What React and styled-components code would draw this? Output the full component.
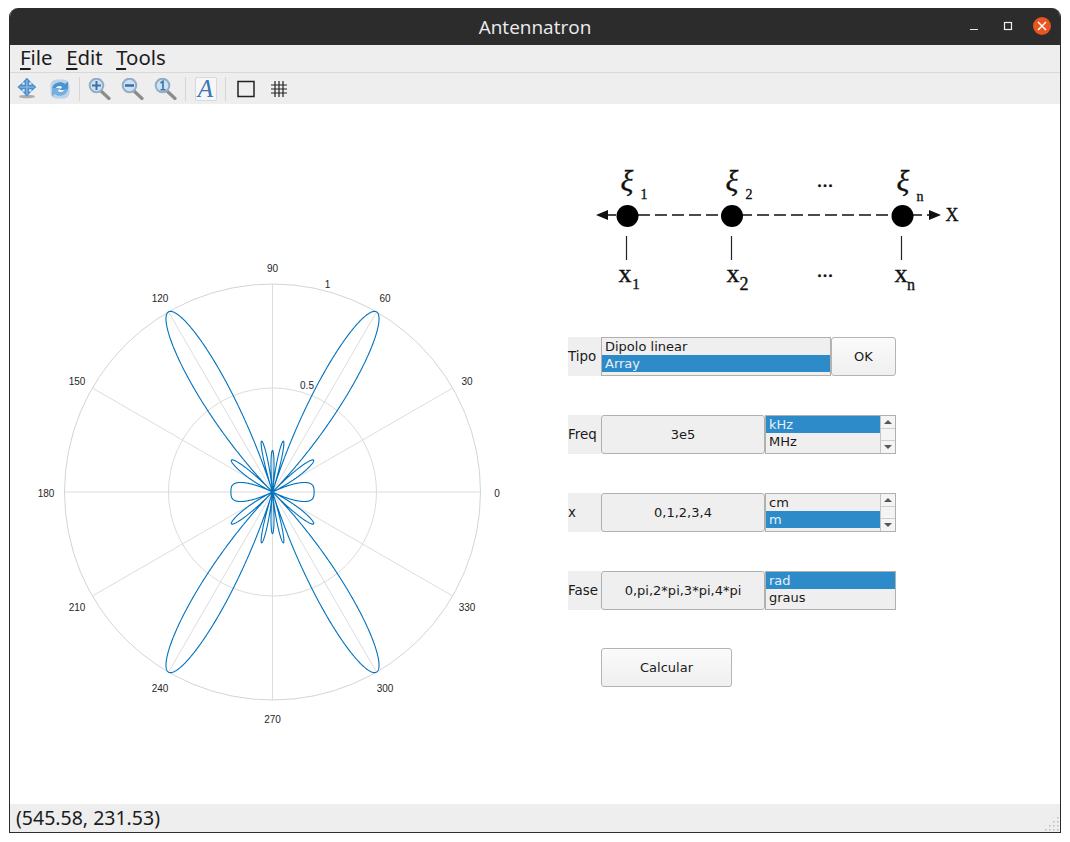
import React from "react";
import styled, { createGlobalStyle } from "styled-components";

const GlobalStyle = createGlobalStyle`
    html, body {
        margin: 0;
        padding: 0;
        background: #ffffff;
    }
    body {
        font-family: "DejaVu Sans", sans-serif;
    }
`;

const Window = styled.div`
    box-sizing: border-box;
    width: 1052px;
    height: 825px;
    margin: 8px 0 0 9px;
    display: flex;
    flex-direction: column;
    border-radius: 9px 9px 0 0;
    border: 1px solid #2c2c2c;
    border-top: 0;
    overflow: hidden;
`;

const TitleBar = styled.header`
    position: relative;
    flex: 0 0 37px;
    display: flex;
    align-items: center;
    justify-content: center;
    background: #2c2c2c;
    color: #ececec;
    font-family: "Open Sans", "Noto Sans", sans-serif;
    font-size: 19px;
`;

const WindowControls = styled.div`
    position: absolute;
    right: 9px;
    top: 9px;
    display: flex;
    align-items: center;
    gap: 16px;
`;

const WindowControl = styled.button`
    width: 18px;
    height: 18px;
    padding: 0;
    border: 0;
    border-radius: 50%;
    background: ${(props) => (props.$close ? "#e95420" : "transparent")};
    display: flex;
    align-items: center;
    justify-content: center;
`;

const MenuBar = styled.nav`
    flex: 0 0 28px;
    display: flex;
    align-items: center;
    gap: 13.5px;
    padding: 0 0 2px 10px;
    box-sizing: border-box;
    background: #eeeeee;
    border-bottom: 1px solid #d8d8d8;
    font-family: "Noto Sans", sans-serif;
    font-size: 20.4px;
    line-height: 25px;
    color: #1c1c1c;
`;

const Mnemonic = styled.span`
    text-decoration: underline;
    text-decoration-thickness: 2px;
    text-underline-offset: 3px;
`;

const ToolBar = styled.div`
    flex: 0 0 31px;
    display: flex;
    align-items: center;
    background: #eeeeee;
`;

const ToolButton = styled.button`
    box-sizing: border-box;
    width: 33px;
    height: 26px;
    padding: 0;
    background: transparent;
    border: 0;
    display: flex;
    align-items: center;
    justify-content: center;
`;

const ToolSeparator = styled.span`
    width: 1px;
    height: 24px;
    margin: 0 3px;
    background: #d6d6d6;
`;

const ToggledItalic = styled.span`
    box-sizing: border-box;
    width: 22px;
    height: 24px;
    display: flex;
    align-items: center;
    justify-content: center;
    background: #f7f7f7;
    border: 1px solid #d9d9d9;
    border-radius: 2px;
    color: #3a76b8;
    font-family: "Liberation Serif", serif;
    font-style: italic;
    font-size: 25px;
`;

const Canvas = styled.main`
    flex: 1;
    display: flex;
    background: #ffffff;
    min-height: 0;
`;

const PlotSvg = styled.svg`
    display: block;
    flex: 0 0 540px;
    width: 540px;
    height: 700px;
`;

const PlotLabel = styled.text`
    font-family: "Liberation Sans", sans-serif;
    font-size: 10px;
    fill: #262626;
    text-anchor: middle;
    dominant-baseline: middle;
`;

const SidePanel = styled.section`
    display: flex;
    flex-direction: column;
    padding: 60px 0 0 18px;
`;

const DiagramSvg = styled.svg`
    display: block;
    width: 400px;
    height: 140px;
    margin-bottom: 33px;
`;

const DiagramText = styled.text`
    font-family: "Liberation Serif", serif;
    font-size: ${(props) => props.$size || 22}px;
    fill: #111111;
    stroke: #111111;
    stroke-width: 0.35px;
    text-anchor: middle;
`;

const Form = styled.div`
    display: flex;
    flex-direction: column;
    gap: 39px;
`;

const Row = styled.div`
    display: flex;
    height: 39px;
    font-size: 13px;
    color: #1a1a1a;
`;

const RowLabel = styled.label`
    flex: 0 0 33px;
    display: flex;
    align-items: center;
    background: #efefef;
    white-space: nowrap;
    font-size: 13.4px;
`;

const ValueField = styled.div`
    box-sizing: border-box;
    flex: 0 0 164px;
    display: flex;
    align-items: center;
    justify-content: center;
    background: #efefef;
    border: 1px solid #b0b0b0;
    border-radius: 3px;
`;

const ListBox = styled.div`
    box-sizing: border-box;
    flex: 0 0 ${(props) => props.$width}px;
    display: flex;
    background: #efefef;
    border: 1px solid #b0b0b0;
`;

const ListItems = styled.ul`
    flex: 1;
    margin: 0;
    padding: 0;
    list-style: none;
`;

const ListItem = styled.li`
    height: 17px;
    line-height: 17px;
    padding-left: 3px;
    background: ${(props) => (props.$selected ? "#2e8bc9" : "transparent")};
    color: ${(props) => (props.$selected ? "#e6f1f8" : "#1a1a1a")};
`;

const ScrollBar = styled.div`
    flex: 0 0 14px;
    display: flex;
    flex-direction: column;
    border-left: 1px solid #c4c4c4;
    background: #f4f4f4;
`;

const ScrollArrow = styled.span`
    flex: 0 0 12px;
    display: flex;
    align-items: center;
    justify-content: center;
    background: #f4f4f4;
    &::before {
        content: "";
        border-left: 4px solid transparent;
        border-right: 4px solid transparent;
        ${(props) => (props.$down ? "border-top" : "border-bottom")}: 4px solid #555555;
    }
`;

const ScrollTrack = styled.span`
    flex: 1;
    border-top: 1px solid #cfcfcf;
    border-bottom: 1px solid #cfcfcf;
`;

const PushButton = styled.button`
    box-sizing: border-box;
    flex: 0 0 ${(props) => props.$width}px;
    height: 39px;
    padding: 0;
    border: 1px solid #b4b4b4;
    border-radius: 3px;
    background: linear-gradient(#fbfbfb, #efefef);
    font-family: inherit;
    font-size: 13px;
    color: #1a1a1a;
`;

const ActionRow = styled(Row)`
    margin-top: -1px;
    padding-left: 33px;
`;

const StatusBar = styled.footer`
    position: relative;
    flex: 0 0 28px;
    display: flex;
    align-items: center;
    padding-left: 6px;
    background: #eeeeee;
    font-family: "Noto Sans", sans-serif;
    font-size: 19.5px;
    line-height: 26px;
    color: #1c1c1c;
`;

const Grip = styled.svg`
    position: absolute;
    right: 1px;
    bottom: 1px;
`;

// 5 element array, d = 1 m, 300 MHz, progressive phase of pi
const patternPath = () => {
    const points = [];
    for (let i = 0; i <= 3600; i++) {
        const t = (i / 10) * (Math.PI / 180);
        const psi = 2 * Math.PI * Math.cos(t) + Math.PI;
        const den = 5 * Math.sin(psi / 2);
        const r = Math.abs(den) < 1e-6 ? 1 : Math.abs(Math.sin((5 * psi) / 2) / den);
        const x = 272.5 + 208 * r * Math.cos(t);
        const y = 492 - 208 * r * Math.sin(t);
        points.push(`${x.toFixed(2)} ${y.toFixed(2)}`);
    }
    return "M" + points.join("L");
};

const ANGLE_LABELS = [
    { text: "0", x: 497, y: 494 },
    { text: "30", x: 467, y: 382 },
    { text: "60", x: 385, y: 299 },
    { text: "90", x: 272.5, y: 269 },
    { text: "120", x: 160, y: 299 },
    { text: "150", x: 77, y: 382 },
    { text: "180", x: 46, y: 494 },
    { text: "210", x: 77, y: 608 },
    { text: "240", x: 160, y: 689 },
    { text: "270", x: 272.5, y: 720 },
    { text: "300", x: 385, y: 689 },
    { text: "330", x: 467, y: 608 },
];

function PolarPlot() {
    const spokes = [];
    for (let a = 0; a < 180; a += 30) {
        const c = Math.cos((a * Math.PI) / 180) * 208;
        const s = Math.sin((a * Math.PI) / 180) * 208;
        spokes.push(
            <line key={a} x1={272.5 - c} y1={492 + s} x2={272.5 + c} y2={492 - s} stroke="#dcdcdc" strokeWidth="1" />
        );
    }
    return (
        <PlotSvg viewBox="10 104 540 700">
            {spokes}
            <circle cx="272.5" cy="492" r="104" fill="none" stroke="#dcdcdc" />
            <circle cx="272.5" cy="492" r="208" fill="none" stroke="#d4d4d4" />
            {ANGLE_LABELS.map((l) => (
                <PlotLabel key={l.text} x={l.x} y={l.y}>{l.text}</PlotLabel>
            ))}
            <PlotLabel x="327.5" y="285">1</PlotLabel>
            <PlotLabel x="307" y="386">0.5</PlotLabel>
            <path d={patternPath()} fill="none" stroke="#0072bd" strokeWidth="1.1" />
        </PlotSvg>
    );
}

function ArrayDiagram() {
    return (
        <DiagramSvg viewBox="568 164 400 140">
            <line x1="604" y1="215" x2="932" y2="215" stroke="#111" strokeWidth="1.4" strokeDasharray="12 5" />
            <path d="M596 215l12-5v10zM941 215l-12-5v10z" fill="#111" />
            <circle cx="627.5" cy="216" r="11" fill="#000" />
            <circle cx="732" cy="216" r="11" fill="#000" />
            <circle cx="902.5" cy="216" r="11" fill="#000" />
            <path d="M626.5 236v24M731.5 236v24M901.5 236v24" stroke="#222" strokeWidth="1.2" />
            <DiagramText x="627" y="191" $size="30" fontStyle="italic">ξ</DiagramText>
            <DiagramText x="644" y="199" $size="14">1</DiagramText>
            <DiagramText x="732" y="191" $size="30" fontStyle="italic">ξ</DiagramText>
            <DiagramText x="749" y="199" $size="14">2</DiagramText>
            <DiagramText x="903" y="191" $size="30" fontStyle="italic">ξ</DiagramText>
            <DiagramText x="920" y="201" $size="14">n</DiagramText>
            <DiagramText x="825" y="187" $size="22">...</DiagramText>
            <DiagramText x="825" y="277" $size="22">...</DiagramText>
            <DiagramText x="952" y="221" $size="18">X</DiagramText>
            <DiagramText x="625" y="282" $size="26">x</DiagramText>
            <DiagramText x="636" y="289" $size="15">1</DiagramText>
            <DiagramText x="733" y="282" $size="26">x</DiagramText>
            <DiagramText x="744" y="290" $size="18">2</DiagramText>
            <DiagramText x="901" y="282" $size="26">x</DiagramText>
            <DiagramText x="911" y="290" $size="16">n</DiagramText>
        </DiagramSvg>
    );
}

function PanIcon() {
    return (
        <svg width="22" height="22" viewBox="0 0 22 22">
            <ellipse cx="11" cy="18.5" rx="8" ry="1.8" fill="#7d8287" opacity="0.6" />
            <g transform="translate(1 -0.8) scale(0.9)">
                <path d="M11 .5L16 6h-2.500v2.500H16V6l5.500 5L16 16v-2.500h-2.500V16H16l-5 5.500L6 16h2.500v-2.500H6V16L.5 11 6 6v2.500h2.500V6H6z" fill="#4a8fce" />
                <path d="M11 3v16M3 11h16" stroke="#86b8e4" strokeWidth="1.600" />
            </g>
        </svg>
    );
}

function RefreshIcon() {
    return (
        <svg width="22" height="22" viewBox="0 0 22 22">
            <rect x="1.500" y="1.500" width="19" height="19" rx="6" fill="#b9d3ea" />
            <rect x="6" y="7" width="10" height="8" fill="#eef4fa" />
            <path d="M3 11C3.500 5 12 2 16 6l3-2.500V12h-8.500l2.800-3C11 7 7 8 6.500 11z" fill="#4c92d0" />
            <path d="M19 11c-.5 6-9 9-13 5l-3 2.500V10h8.500l-2.800 3c2.300 2 6.300 1 6.800-2z" fill="#78aede" />
        </svg>
    );
}

function ZoomIcon({ kind }) {
    return (
        <svg width="24" height="22" viewBox="1 0 24 22">
            <path d="M14 13l8 7.500" stroke="#8c8c8c" strokeWidth="3.200" strokeLinecap="round" />
            <circle cx="9.500" cy="7.500" r="6.800" fill="#cfe0f0" stroke="#93adc6" strokeWidth="2" />
            {kind === "in" && <path d="M5 7.500h9M9.500 3v9" stroke="#3672ab" strokeWidth="2" />}
            {kind === "out" && <path d="M5 7.500h9" stroke="#3672ab" strokeWidth="2.400" />}
            {kind === "one" && <path d="M7.500 5L10 3.300v8.400M7.500 11.700h5" stroke="#3672ab" strokeWidth="1.600" fill="none" />}
        </svg>
    );
}

function SquareIcon() {
    return (
        <svg width="18" height="18" viewBox="0 0 18 18">
            <rect x="1" y="1.500" width="16" height="15" fill="none" stroke="#222" strokeWidth="1.500" />
        </svg>
    );
}

function GridIcon() {
    return (
        <svg width="18" height="18" viewBox="0 0 18 18">
            <path d="M5 1v16M9 1v16M13 1v16M1 5h16M1 9h16M1 13h16" stroke="#222" strokeWidth="1.200" />
        </svg>
    );
}

function ScrollStrip() {
    return (
        <ScrollBar>
            <ScrollArrow />
            <ScrollTrack />
            <ScrollArrow $down />
        </ScrollBar>
    );
}

function GripDots() {
    const dots = [[12, 0], [8, 4], [12, 4], [4, 8], [8, 8], [12, 8], [0, 12], [4, 12], [8, 12], [12, 12]];
    return (
        <Grip width="14" height="14" viewBox="0 0 14 14">
            {dots.map(([x, y]) => (
                <rect key={`${x}-${y}`} x={x} y={y} width="1.500" height="1.500" fill="#bdbdbd" />
            ))}
        </Grip>
    );
}

function App() {
    return (
        <>
            <GlobalStyle />
            <Window>
                <TitleBar>
                    Antennatron
                    <WindowControls>
                        <WindowControl>
                            <svg width="10" height="10" viewBox="0 0 10 10">
                                <path d="M1 8.500h8" stroke="#e8e8e8" strokeWidth="1.200" />
                            </svg>
                        </WindowControl>
                        <WindowControl>
                            <svg width="10" height="10" viewBox="0 0 10 10">
                                <rect x="1.500" y="1.500" width="7" height="7" fill="none" stroke="#f0f0f0" strokeWidth="1.200" />
                            </svg>
                        </WindowControl>
                        <WindowControl $close>
                            <svg width="10" height="10" viewBox="0 0 10 10">
                                <path d="M1 1l8 8M9 1l-8 8" stroke="#ffffff" strokeWidth="1.500" />
                            </svg>
                        </WindowControl>
                    </WindowControls>
                </TitleBar>
                <MenuBar>
                    <span><Mnemonic>F</Mnemonic>ile</span>
                    <span><Mnemonic>E</Mnemonic>dit</span>
                    <span><Mnemonic>T</Mnemonic>ools</span>
                </MenuBar>
                <ToolBar>
                    <ToolButton><PanIcon /></ToolButton>
                    <ToolButton><RefreshIcon /></ToolButton>
                    <ToolSeparator />
                    <ToolButton><ZoomIcon kind="in" /></ToolButton>
                    <ToolButton><ZoomIcon kind="out" /></ToolButton>
                    <ToolButton><ZoomIcon kind="one" /></ToolButton>
                    <ToolSeparator />
                    <ToolButton><ToggledItalic>A</ToggledItalic></ToolButton>
                    <ToolSeparator />
                    <ToolButton><SquareIcon /></ToolButton>
                    <ToolButton><GridIcon /></ToolButton>
                </ToolBar>
                <Canvas>
                    <PolarPlot />
                    <SidePanel>
                        <ArrayDiagram />
                        <Form>
                            <Row>
                                <RowLabel>Tipo</RowLabel>
                                <ListBox $width={230}>
                                    <ListItems>
                                        <ListItem>Dipolo linear</ListItem>
                                        <ListItem $selected>Array</ListItem>
                                    </ListItems>
                                </ListBox>
                                <PushButton $width={65}>OK</PushButton>
                            </Row>
                            <Row>
                                <RowLabel>Freq</RowLabel>
                                <ValueField>3e5</ValueField>
                                <ListBox $width={131}>
                                    <ListItems>
                                        <ListItem $selected>kHz</ListItem>
                                        <ListItem>MHz</ListItem>
                                    </ListItems>
                                    <ScrollStrip />
                                </ListBox>
                            </Row>
                            <Row>
                                <RowLabel>x</RowLabel>
                                <ValueField>0,1,2,3,4</ValueField>
                                <ListBox $width={131}>
                                    <ListItems>
                                        <ListItem>cm</ListItem>
                                        <ListItem $selected>m</ListItem>
                                    </ListItems>
                                    <ScrollStrip />
                                </ListBox>
                            </Row>
                            <Row>
                                <RowLabel>Fase</RowLabel>
                                <ValueField>0,pi,2*pi,3*pi,4*pi</ValueField>
                                <ListBox $width={131}>
                                    <ListItems>
                                        <ListItem $selected>rad</ListItem>
                                        <ListItem>graus</ListItem>
                                    </ListItems>
                                </ListBox>
                            </Row>
                            <ActionRow>
                                <PushButton $width={131}>Calcular</PushButton>
                            </ActionRow>
                        </Form>
                    </SidePanel>
                </Canvas>
                <StatusBar>
                    (545.58, 231.53)
                    <GripDots />
                </StatusBar>
            </Window>
        </>
    );
}

export default App;
